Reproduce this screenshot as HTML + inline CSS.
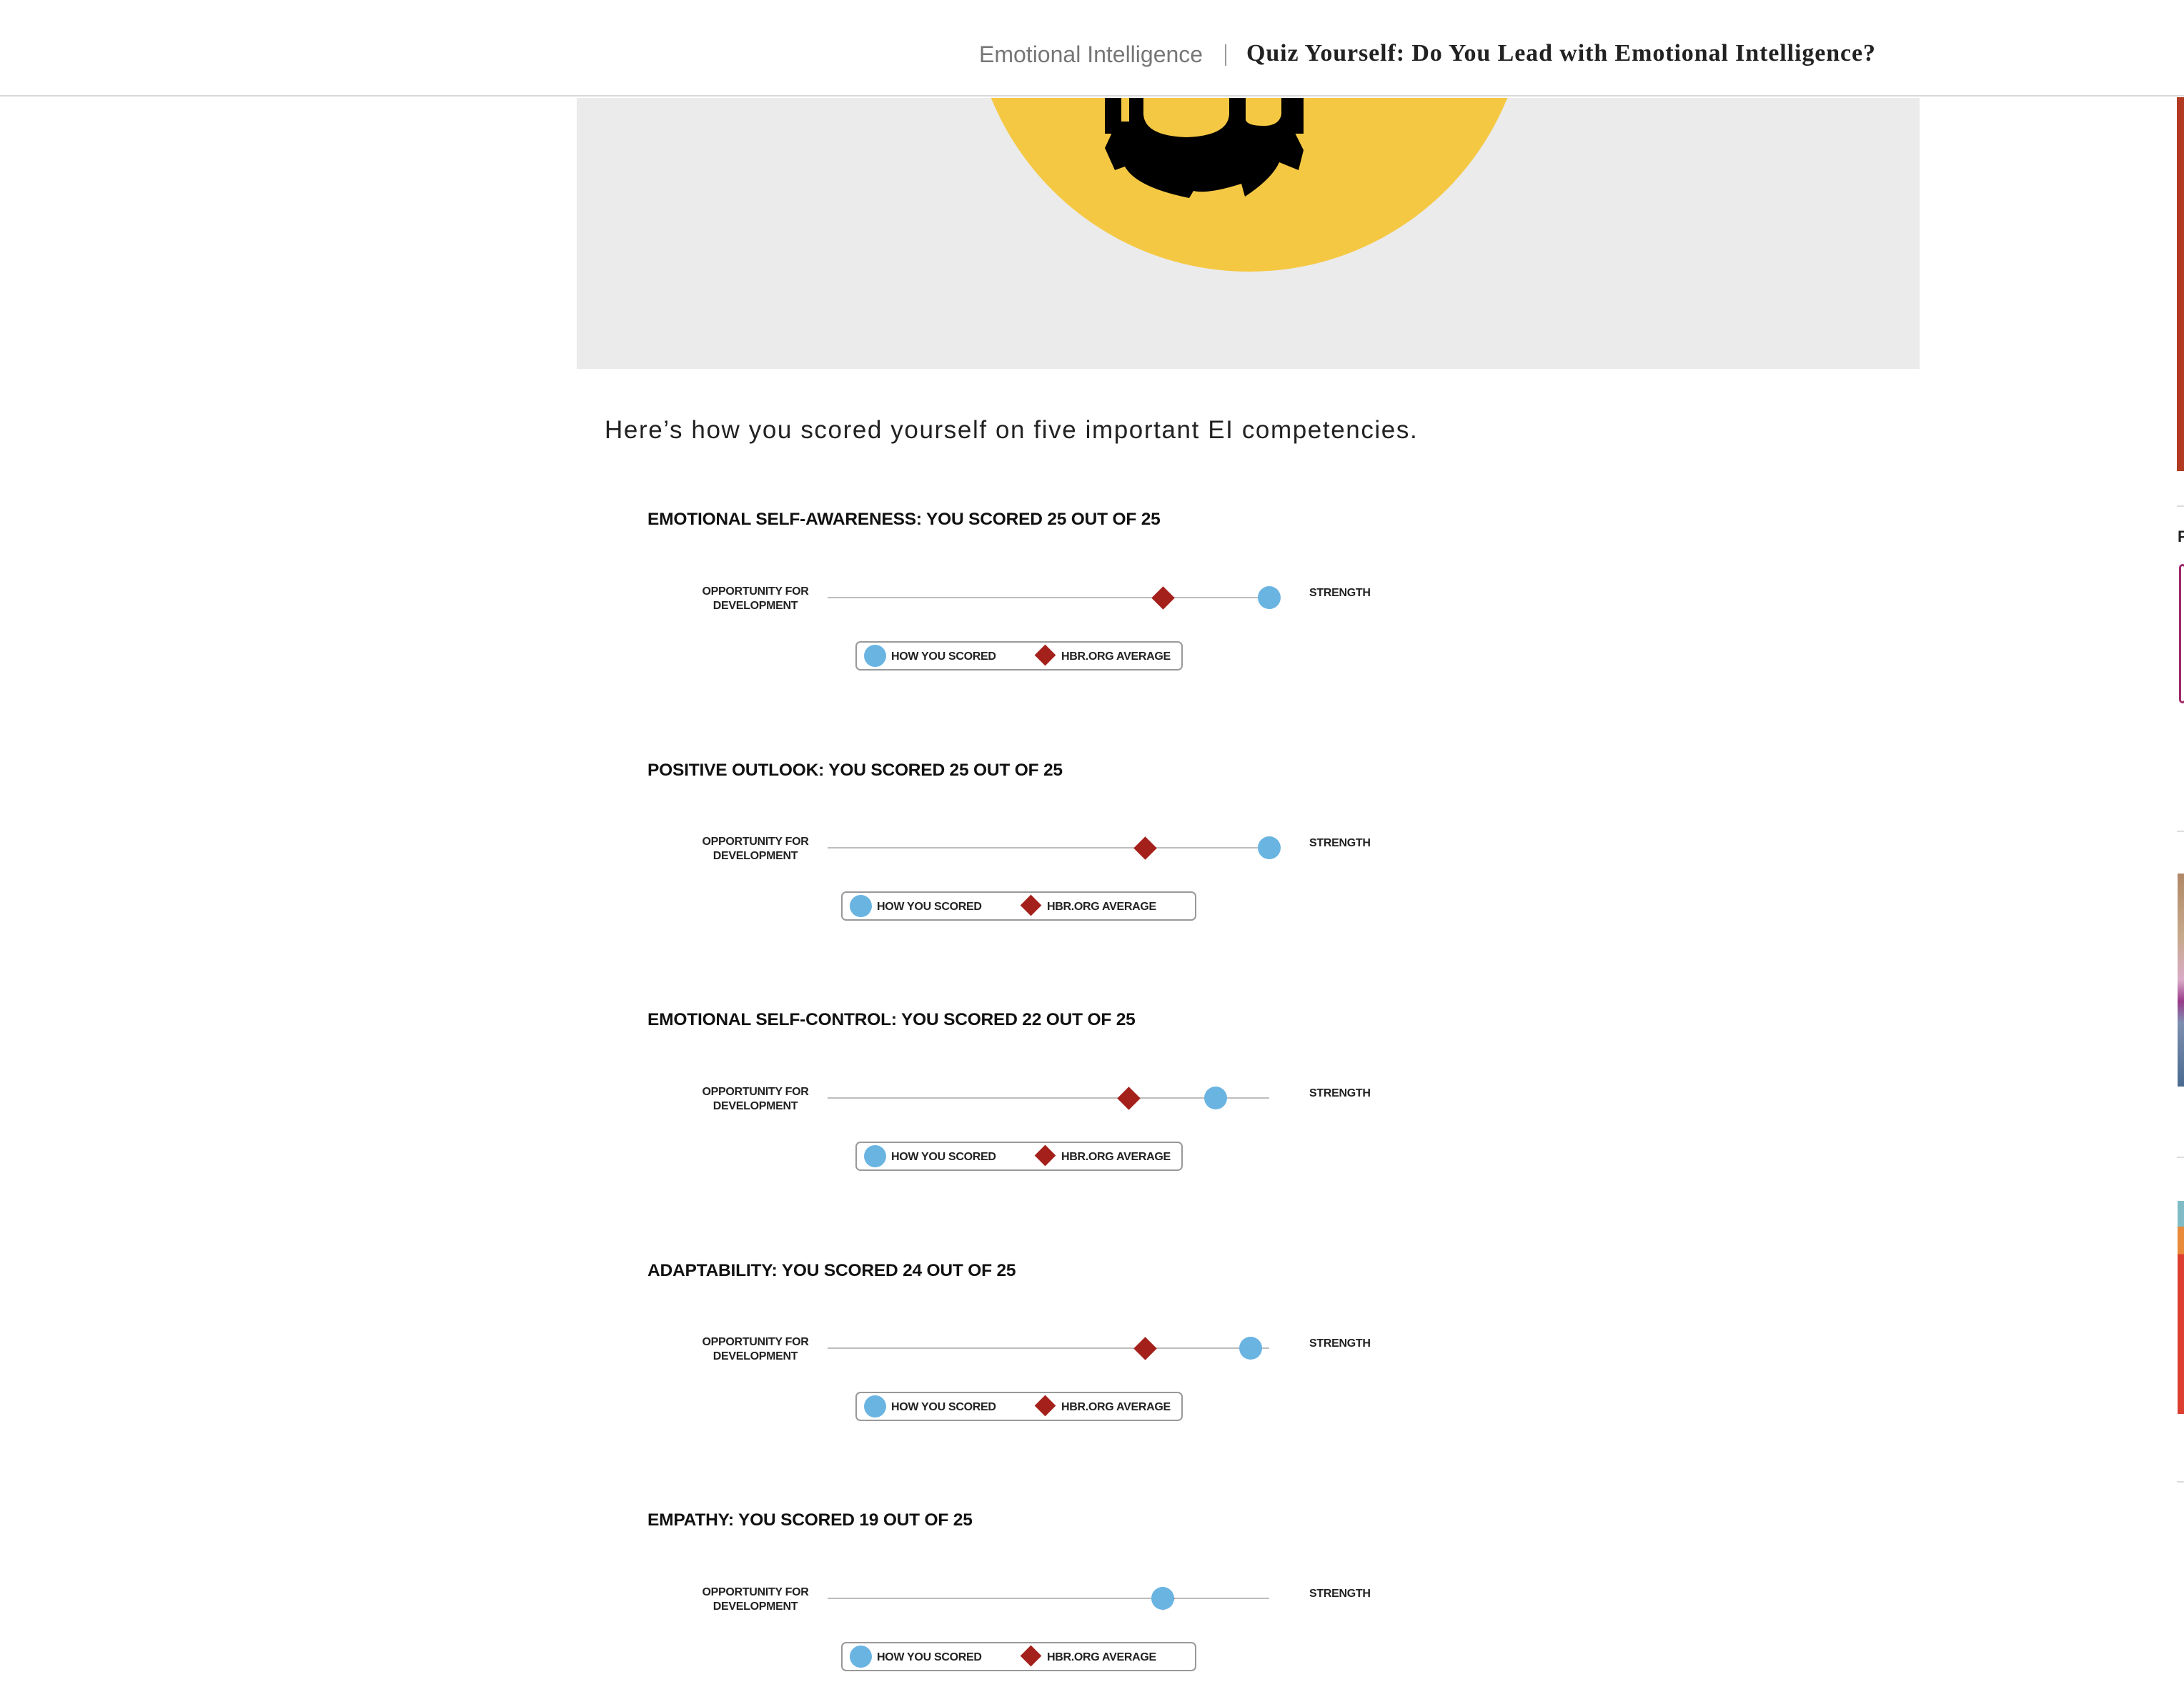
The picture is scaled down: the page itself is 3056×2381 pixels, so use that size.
<!DOCTYPE html>
<html><head><meta charset="utf-8"><style>
*{margin:0;padding:0;box-sizing:border-box}
body{width:3056px;height:2381px;background:#fff;position:relative;overflow:hidden;font-family:"Liberation Sans",Arial,sans-serif}
.abs{position:absolute}
.h{position:absolute;left:906px;font-weight:bold;font-size:24.5px;letter-spacing:-0.2px;color:#111;white-space:nowrap;line-height:26px}
.lab{position:absolute;font-size:16px;font-weight:bold;color:#222;text-align:center;line-height:20px;letter-spacing:-0.3px;white-space:nowrap}
.line{position:absolute;left:1158px;width:618px;height:2px;background:#bdbdbd}
.dot{position:absolute;width:32px;height:32px;border-radius:50%;background:#6ab4e2}
.dia{position:absolute;width:23px;height:23px;background:#a4201b;transform:rotate(45deg)}
.leg{position:absolute;height:41px;border:2px solid #999;border-radius:7px;background:#fff}
.leg span{position:absolute;top:11px;font-size:16px;font-weight:bold;color:#222;letter-spacing:-0.3px;white-space:nowrap;line-height:18px}
</style></head><body>
<div class="abs" style="left:0;top:0;width:3056px;height:135px;border-bottom:2px solid #d8d8d8;background:#fff"></div>
<div class="abs" style="left:1370px;top:58px;font-size:32px;color:#767676;white-space:nowrap">Emotional Intelligence</div>
<div class="abs" style="left:1714px;top:62px;width:2px;height:30px;background:#999"></div>
<div class="abs" style="left:1744px;top:56px;font-family:'Liberation Serif',serif;font-weight:bold;font-size:34px;letter-spacing:0.9px;color:#222;white-space:nowrap">Quiz Yourself: Do You Lead with Emotional Intelligence?</div>

<div class="abs" style="left:807px;top:137px;width:1879px;height:379px;background:#ebebeb;overflow:hidden">
<svg width="1879" height="379" viewBox="807 137 1879 379" style="position:absolute;left:0;top:0">
<circle cx="1748" cy="-10" r="390" fill="#f5c844"/>
<rect x="1546" y="135" width="278" height="52" fill="#000"/>
<path d="M1560,177 L1546,207 L1560,238 L1574,233 Q1590,262 1664,277 L1670,267 Q1690,272 1737,257 L1742,275 Q1780,250 1790,227 L1817,238 L1824,210 L1810,182 Z" fill="#000"/>
<rect x="1569" y="135" width="11" height="35" fill="#f5c844"/>
<path d="M1600,135 L1600,160 Q1602,190 1660,192 Q1718,190 1720,160 L1720,135 Z" fill="#f5c844"/>
<path d="M1743,135 L1743,168 Q1746,176 1768,176 Q1790,176 1793,160 L1793,135 Z" fill="#f5c844"/>
</svg>
</div>

<div class="abs" style="left:3046px;top:136px;width:10px;height:523px;background:#b33a22"></div>
<div class="abs" style="left:3046px;top:707px;width:10px;height:2px;background:#ddd"></div>
<div class="abs" style="left:3047px;top:738px;font-weight:bold;font-size:22px;color:#222">F</div>
<div class="abs" style="left:3049px;top:789px;width:10px;height:195px;border:3px solid #a02a6a;border-radius:6px"></div>
<div class="abs" style="left:3046px;top:1162px;width:10px;height:2px;background:#ddd"></div>
<div class="abs" style="left:3047px;top:1222px;width:9px;height:298px;background:linear-gradient(#b08866,#c7a98b 30%,#d9aac7 50%,#9a3a8a 60%,#7d8fb0 70%,#4a6a90)"></div>
<div class="abs" style="left:3046px;top:1618px;width:10px;height:2px;background:#ddd"></div>
<div class="abs" style="left:3047px;top:1680px;width:9px;height:298px;background:linear-gradient(#7fbcc6 0 12%,#e88a3a 12% 25%,#dc3f30 25%)"></div>
<div class="abs" style="left:3046px;top:2072px;width:10px;height:2px;background:#ddd"></div>

<div class="abs" style="left:846px;top:582px;font-size:35px;color:#222;letter-spacing:1.6px;white-space:nowrap">Here’s how you scored yourself on five important EI competencies.</div>

<!-- sections -->
<div class="h" style="top:714px">EMOTIONAL SELF-AWARENESS: YOU SCORED 25 OUT OF 25</div>
<div class="lab" style="left:977px;top:818px;width:160px">OPPORTUNITY FOR<br>DEVELOPMENT</div>
<div class="lab" style="left:1832px;top:820px">STRENGTH</div>
<div class="line" style="top:835px"></div>
<div class="dia" style="left:1616px;top:825px"></div>
<div class="dot" style="left:1760px;top:820px"></div>
<div class="leg" style="left:1197px;top:897px;width:458px"><div class="dot" style="left:10px;top:3px;width:31px;height:31px"></div><span style="left:48px">HOW YOU SCORED</span><div class="dia" style="left:253px;top:7px;width:21px;height:21px"></div><span style="left:286px">HBR.ORG AVERAGE</span></div>

<div class="h" style="top:1065px">POSITIVE OUTLOOK: YOU SCORED 25 OUT OF 25</div>
<div class="lab" style="left:977px;top:1168px;width:160px">OPPORTUNITY FOR<br>DEVELOPMENT</div>
<div class="lab" style="left:1832px;top:1170px">STRENGTH</div>
<div class="line" style="top:1185px"></div>
<div class="dia" style="left:1591px;top:1175px"></div>
<div class="dot" style="left:1760px;top:1170px"></div>
<div class="leg" style="left:1177px;top:1247px;width:497px"><div class="dot" style="left:10px;top:3px;width:31px;height:31px"></div><span style="left:48px">HOW YOU SCORED</span><div class="dia" style="left:253px;top:7px;width:21px;height:21px"></div><span style="left:286px">HBR.ORG AVERAGE</span></div>

<div class="h" style="top:1414px">EMOTIONAL SELF-CONTROL: YOU SCORED 22 OUT OF 25</div>
<div class="lab" style="left:977px;top:1518px;width:160px">OPPORTUNITY FOR<br>DEVELOPMENT</div>
<div class="lab" style="left:1832px;top:1520px">STRENGTH</div>
<div class="line" style="top:1535px"></div>
<div class="dia" style="left:1568px;top:1525px"></div>
<div class="dot" style="left:1685px;top:1520px"></div>
<div class="leg" style="left:1197px;top:1597px;width:458px"><div class="dot" style="left:10px;top:3px;width:31px;height:31px"></div><span style="left:48px">HOW YOU SCORED</span><div class="dia" style="left:253px;top:7px;width:21px;height:21px"></div><span style="left:286px">HBR.ORG AVERAGE</span></div>

<div class="h" style="top:1765px">ADAPTABILITY: YOU SCORED 24 OUT OF 25</div>
<div class="lab" style="left:977px;top:1868px;width:160px">OPPORTUNITY FOR<br>DEVELOPMENT</div>
<div class="lab" style="left:1832px;top:1870px">STRENGTH</div>
<div class="line" style="top:1885px"></div>
<div class="dia" style="left:1591px;top:1875px"></div>
<div class="dot" style="left:1734px;top:1870px"></div>
<div class="leg" style="left:1197px;top:1947px;width:458px"><div class="dot" style="left:10px;top:3px;width:31px;height:31px"></div><span style="left:48px">HOW YOU SCORED</span><div class="dia" style="left:253px;top:7px;width:21px;height:21px"></div><span style="left:286px">HBR.ORG AVERAGE</span></div>

<div class="h" style="top:2114px">EMPATHY: YOU SCORED 19 OUT OF 25</div>
<div class="lab" style="left:977px;top:2218px;width:160px">OPPORTUNITY FOR<br>DEVELOPMENT</div>
<div class="lab" style="left:1832px;top:2220px">STRENGTH</div>
<div class="line" style="top:2235px"></div>
<div class="dia" style="left:1616px;top:2225px"></div>
<div class="dot" style="left:1611px;top:2220px"></div>
<div class="leg" style="left:1177px;top:2297px;width:497px"><div class="dot" style="left:10px;top:3px;width:31px;height:31px"></div><span style="left:48px">HOW YOU SCORED</span><div class="dia" style="left:253px;top:7px;width:21px;height:21px"></div><span style="left:286px">HBR.ORG AVERAGE</span></div>
</body></html>
